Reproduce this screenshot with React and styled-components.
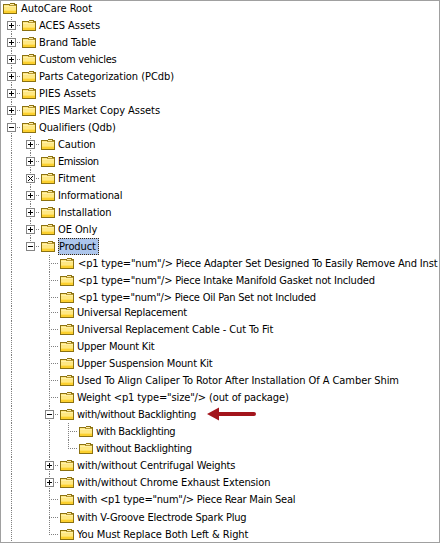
import React from 'react';
import styled, { createGlobalStyle, css } from 'styled-components';

const GlobalStyle = createGlobalStyle`
  html, body { margin: 0; background: #fff; overflow: hidden; }
`;

const dotsDown = 'repeating-linear-gradient(to bottom, #808080 0 1px, transparent 1px 2px)';
const dotsAcross = 'repeating-linear-gradient(to right, #808080 0 1px, transparent 1px 2px)';

const Frame = styled.main`
  position: relative;
  box-sizing: border-box;
  width: 440px;
  height: 543px;
  padding-left: 2px;
  overflow: hidden;
  background: #fff;
  color: #000;
  font: 11px/17px "DejaVu Sans Condensed", "DejaVu Sans", sans-serif;
  font-stretch: condensed;

  &::after {
    content: "";
    position: absolute;
    inset: 0;
    border: 1px solid #a0a0a0;
    pointer-events: none;
  }
`;

const Row = styled.div`
  display: flex;
  align-items: flex-end;
  height: ${(p) => p.$height}px;
  white-space: pre;
`;

const Guide = styled.span`
  position: relative;
  flex: none;
  width: 19px;
  height: 100%;

  ${(p) => p.$line && css`
    &::before {
      content: "";
      position: absolute;
      left: 9px;
      top: 0;
      width: 1px;
      height: ${p.$line === 'end' ? '9px' : '100%'};
      background: ${dotsDown};
    }
  `}

  ${(p) => p.$branch && css`
    &::after {
      content: "";
      position: absolute;
      left: 9px;
      right: 0;
      bottom: 8px;
      height: 1px;
      background: ${dotsAcross};
    }
  `}
`;

const ToggleIcon = styled.svg`
  position: absolute;
  z-index: 1;
  left: 5px;
  bottom: 4px;
  width: 9px;
  height: 9px;
  display: block;
`;

const FolderIcon = styled.svg`
  flex: none;
  width: 14px;
  height: 11px;
  margin: 0 3px 3px 1px;
`;

const Label = styled.span`
  flex: none;
  height: 17px;
  letter-spacing: ${(p) => p.$spacing}px;
  margin-left: ${(p) => p.$shift || 0}px;
`;

const SelectedLabel = styled(Label)`
  box-sizing: border-box;
  width: 41px;
  line-height: 15px;
  border: 1px dotted #3a2810;
  background: #adc6ec;
`;

const Arrow = styled.svg`
  flex: none;
  width: 49px;
  height: 14px;
  margin: 0 0 2px 11px;
`;

function Toggle({ kind }) {
  return (
    <ToggleIcon viewBox="0 0 9 9" shapeRendering="crispEdges">
      <rect width="9" height="9" fill="#848484" />
      <rect x="1" y="1" width="7" height="7" fill="#fff" />
      {kind === 'x' ? (
        <path d="M2 2h1v1h1v1h1V3h1V2h1v1H6v1H5v1h1v1h1v1H6V6H5V5H4v1H3v1H2V6h1V5h1V4H3V3H2z" fill="#000" />
      ) : (
        <path d={kind === '+' ? 'M2 4h5v1H2zM4 2h1v5H4z' : 'M2 4h5v1H2z'} fill="#000" />
      )}
    </ToggleIcon>
  );
}

function Folder() {
  return (
    <FolderIcon viewBox="0 0 14 11" shapeRendering="crispEdges">
      <path d="M0 1h7V0h5v1h2v10H0z" fill="#8c7212" />
      <rect x="1" y="2" width="12" height="8" fill="#ffe883" />
      <rect x="7" y="1" width="4" height="1" fill="#ffedac" />
      <rect x="6" y="2" width="7" height="1" fill="#b99b31" />
      <rect x="1" y="3" width="12" height="1" fill="#fff0a6" />
      <rect x="1" y="7" width="12" height="1" fill="#ffe062" />
      <rect x="1" y="8" width="12" height="2" fill="#fcd02e" />
    </FolderIcon>
  );
}

const items = [
  { d: 0, text: 'AutoCare Root', s: -0.03, shift: 1 },
  { d: 1, t: '+', text: 'ACES Assets', s: -0.03 },
  { d: 1, t: '+', text: 'Brand Table', s: -0.09 },
  { d: 1, t: '+', text: 'Custom vehicles', s: -0.27 },
  { d: 1, t: '+', text: 'Parts Categorization (PCdb)', s: -0.05 },
  { d: 1, t: '+', text: 'PIES Assets', s: 0.02 },
  { d: 1, t: '+', text: 'PIES Market Copy Assets', s: -0.05 },
  { d: 1, t: '-', text: 'Qualifiers (Qdb)', s: -0.11 },
  { d: 2, t: '+', text: 'Caution', s: -0.1 },
  { d: 2, t: '+', text: 'Emission', s: -0.42 },
  { d: 2, t: 'x', text: 'Fitment', s: 0 },
  { d: 2, t: '+', text: 'Informational', s: -0.13 },
  { d: 2, t: '+', text: 'Installation', s: -0.12 },
  { d: 2, t: '+', text: 'OE Only', s: -0.1 },
  { d: 2, t: '-', text: 'Product', s: -0.1, selected: true, end: true },
  { d: 3, text: '<p1 type="num"/> Piece Adapter Set Designed To Easily Remove And Inst', s: -0.16, shift: 1 },
  { d: 3, text: '<p1 type="num"/> Piece Intake Manifold Gasket not Included', s: -0.19, shift: 1 },
  { d: 3, text: '<p1 type="num"/> Piece Oil Pan Set not Included', s: -0.22, shift: 1 },
  { d: 3, text: 'Universal Replacement', s: -0.21, h: 15 },
  { d: 3, text: 'Universal Replacement Cable - Cut To Fit', s: -0.11 },
  { d: 3, text: 'Upper Mount Kit', s: -0.2 },
  { d: 3, text: 'Upper Suspension Mount Kit', s: -0.18 },
  { d: 3, text: 'Used To Align Caliper To Rotor After Installation Of A Camber Shim', s: -0.07 },
  { d: 3, text: 'Weight <p1 type="size"/> (out of package)', s: -0.12 },
  { d: 3, t: '-', text: 'with/without Backlighting', s: -0.28, arrow: true },
  { d: 4, text: 'with Backlighting', s: -0.36 },
  { d: 4, text: 'without Backlighting', s: -0.3, end: true },
  { d: 3, t: '+', text: 'with/without Centrifugal Weights', s: -0.12 },
  { d: 3, t: '+', text: 'with/without Chrome Exhaust Extension', s: -0.13 },
  { d: 3, text: 'with <p1 type="num"/> Piece Rear Main Seal', s: -0.22 },
  { d: 3, text: 'with V-Groove Electrode Spark Plug', s: -0.18, h: 18 },
  { d: 3, text: 'You Must Replace Both Left & Right', s: -0.08, end: true },
];

function TreeRow({ item, underProduct }) {
  const guides = Array.from({ length: item.d }, (_, i) => {
    const own = i === item.d - 1;
    const closed = i === 1 && underProduct;
    const line = own && item.end ? 'end' : closed ? null : 'full';
    return (
      <Guide key={i} $line={line} $branch={own}>
        {own && item.t && <Toggle kind={item.t} />}
      </Guide>
    );
  });
  const Text = item.selected ? SelectedLabel : Label;
  return (
    <Row $height={item.h || 17}>
      {guides}
      <Folder />
      <Text $spacing={item.s} $shift={item.shift}>{item.text}</Text>
      {item.arrow && (
        <Arrow viewBox="0 0 49 14">
          <path d="M0 7L12 0.5V5H47Q49 5 49 7Q49 9 47 9H12V13.5Z" fill="#a3151c" />
        </Arrow>
      )}
    </Row>
  );
}

export default function App() {
  return (
    <>
      <GlobalStyle />
      <Frame>
        {items.map((item) => (
          <TreeRow key={item.text} item={item} underProduct={item.d > 2} />
        ))}
      </Frame>
    </>
  );
}
